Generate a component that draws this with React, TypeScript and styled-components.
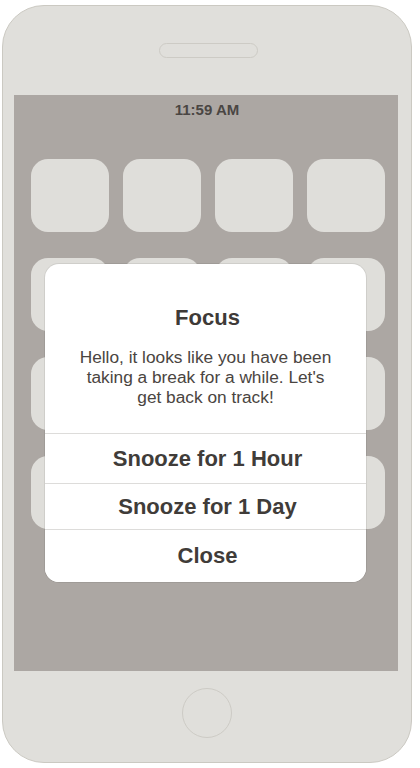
import React from "react";
import styled, { createGlobalStyle } from "styled-components";

const Global = createGlobalStyle`
  html, body { margin: 0; padding: 0; background: #ffffff; }
  body { font-family: "Liberation Sans", Arial, sans-serif; }
`;

const Page = styled.div`
  padding: 5px 0 0 2px;
`;

const Phone = styled.div`
  box-sizing: border-box;
  width: 410px;
  height: 758px;
  background: #e0dfdb;
  border: 1px solid #cbc9c2;
  border-radius: 42px;
  display: flex;
  flex-direction: column;
  align-items: center;
  padding-top: 37px;
`;

const Speaker = styled.div`
  box-sizing: border-box;
  width: 99px;
  height: 15px;
  border: 1px solid #cdcbc5;
  border-radius: 8px;
  margin-left: 3px;
`;

const Screen = styled.div`
  position: relative;
  box-sizing: border-box;
  width: 384px;
  height: 576px;
  margin-top: 37px;
  margin-right: 2px;
  background: #aca7a3;
  display: flex;
  flex-direction: column;
`;

const StatusBar = styled.div`
  height: 16px;
  margin-top: 7px;
  padding-left: 2px;
  text-align: center;
  font-size: 15px;
  line-height: 16px;
  font-weight: 700;
  color: #4a4643;
`;

const Grid = styled.div`
  margin-top: 41px;
  margin-left: 17px;
  display: grid;
  grid-template-columns: repeat(4, 78px);
  grid-auto-rows: 73px;
  column-gap: 14px;
  row-gap: 26px;
`;

const AppIcon = styled.div`
  background: #dfdeda;
  border-radius: 17px;
`;

const Dialog = styled.div`
  position: absolute;
  left: 31px;
  top: 169px;
  width: 321px;
  box-sizing: border-box;
  background: #ffffff;
  border-radius: 14px;
  box-shadow: 0 0 0 1px rgba(0, 0, 0, 0.07);
  overflow: hidden;
  display: flex;
  flex-direction: column;
`;

const Message = styled.div`
  padding: 42px 28px 26px;
  text-align: center;
`;

const Title = styled.div`
  padding-left: 4px;
  font-size: 22px;
  line-height: 24px;
  font-weight: 700;
  color: #3e3a37;
`;

const Body = styled.div`
  margin-top: 17px;
  font-size: 17.3px;
  line-height: 20px;
  color: #4a4541;
`;

const Action = styled.button<{ $h: number }>`
  appearance: none;
  display: flex;
  align-items: center;
  justify-content: center;
  height: ${(p) => p.$h}px;
  padding: 0 0 0 4px;
  margin: 0;
  border: 0;
  border-top: 1px solid #dddcda;
  background: #ffffff;
  font-family: "Liberation Sans", Arial, sans-serif;
  font-size: 22px;
  font-weight: 700;
  color: #403c39;
  cursor: pointer;
`;

const HomeButton = styled.div`
  box-sizing: border-box;
  width: 50px;
  height: 50px;
  margin-top: 17px;
  border-radius: 50%;
  border: 1px solid #cdcbc5;
`;

export default function App() {
  const icons = Array.from({ length: 16 }, (_, i) => i);
  return (
    <>
      <Global />
      <Page>
        <Phone>
          <Speaker />
          <Screen>
            <StatusBar>11:59 AM</StatusBar>
            <Grid>
              {icons.map((i) => (
                <AppIcon key={i} />
              ))}
            </Grid>
            <Dialog>
              <Message>
                <Title>Focus</Title>
                <Body>
                  Hello, it looks like you have been taking a break for a
                  while. Let's get back on track!
                </Body>
              </Message>
              <Action $h={50}>Snooze for 1 Hour</Action>
              <Action $h={46}>Snooze for 1 Day</Action>
              <Action $h={53}>Close</Action>
            </Dialog>
          </Screen>
          <HomeButton />
        </Phone>
      </Page>
    </>
  );
}
